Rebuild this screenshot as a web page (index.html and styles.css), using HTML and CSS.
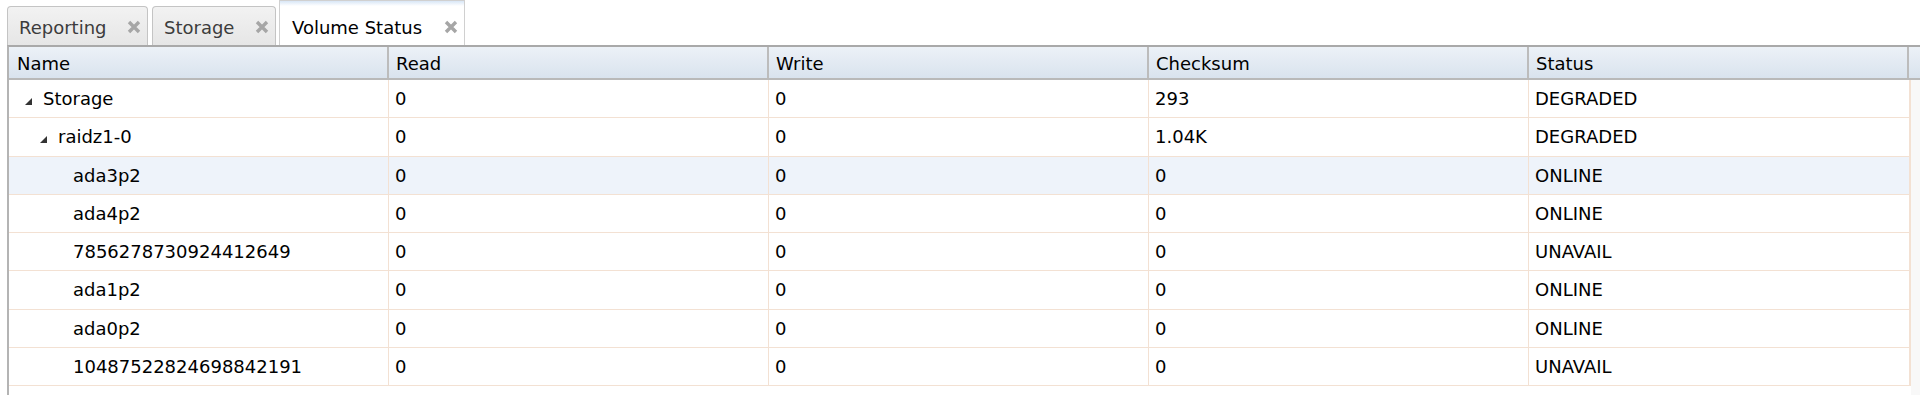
FILE: index.html
```html
<!DOCTYPE html>
<html lang="en">
<head>
    <meta charset="UTF-8">
    <title>Volume Status</title>
    <link rel="stylesheet" href="styles.css">
</head>
<body>

<div class="panel">
    <div class="tabbar">
        <div class="tab tab-reporting">
            <span class="tab-label">Reporting</span>
            <svg class="tab-close" width="14" height="14" viewBox="0 0 14 14"><path d="M2 2 L12 12 M12 2 L2 12"/></svg>
        </div>
        <div class="tab tab-storage">
            <span class="tab-label">Storage</span>
            <svg class="tab-close" width="14" height="14" viewBox="0 0 14 14"><path d="M2 2 L12 12 M12 2 L2 12"/></svg>
        </div>
        <div class="tab tab-volume active">
            <span class="tab-label">Volume Status</span>
            <svg class="tab-close" width="14" height="14" viewBox="0 0 14 14"><path d="M2 2 L12 12 M12 2 L2 12"/></svg>
        </div>
    </div>

    <div class="grid">
        <div class="grid-header">
            <div class="hcell">Name</div>
            <div class="hcell">Read</div>
            <div class="hcell">Write</div>
            <div class="hcell">Checksum</div>
            <div class="hcell">Status</div>
        </div>

        <div class="grid-body">
            <div class="row">
                <div class="cell name level-0"><svg class="expander" width="7" height="7" viewBox="0 0 7 7"><polygon points="7,0 7,7 0,7"/></svg>Storage</div>
                <div class="cell">0</div>
                <div class="cell">0</div>
                <div class="cell">293</div>
                <div class="cell">DEGRADED</div>
            </div>
            <div class="row">
                <div class="cell name level-1"><svg class="expander" width="7" height="7" viewBox="0 0 7 7"><polygon points="7,0 7,7 0,7"/></svg>raidz1-0</div>
                <div class="cell">0</div>
                <div class="cell">0</div>
                <div class="cell">1.04K</div>
                <div class="cell">DEGRADED</div>
            </div>
            <div class="row hover">
                <div class="cell name level-2">ada3p2</div>
                <div class="cell">0</div>
                <div class="cell">0</div>
                <div class="cell">0</div>
                <div class="cell">ONLINE</div>
            </div>
            <div class="row">
                <div class="cell name level-2">ada4p2</div>
                <div class="cell">0</div>
                <div class="cell">0</div>
                <div class="cell">0</div>
                <div class="cell">ONLINE</div>
            </div>
            <div class="row">
                <div class="cell name level-2">7856278730924412649</div>
                <div class="cell">0</div>
                <div class="cell">0</div>
                <div class="cell">0</div>
                <div class="cell">UNAVAIL</div>
            </div>
            <div class="row">
                <div class="cell name level-2">ada1p2</div>
                <div class="cell">0</div>
                <div class="cell">0</div>
                <div class="cell">0</div>
                <div class="cell">ONLINE</div>
            </div>
            <div class="row">
                <div class="cell name level-2">ada0p2</div>
                <div class="cell">0</div>
                <div class="cell">0</div>
                <div class="cell">0</div>
                <div class="cell">ONLINE</div>
            </div>
            <div class="row">
                <div class="cell name level-2">10487522824698842191</div>
                <div class="cell">0</div>
                <div class="cell">0</div>
                <div class="cell">0</div>
                <div class="cell">UNAVAIL</div>
            </div>
        </div>
    </div>
</div>

</body>
</html>
```

FILE: styles.css
```css
html, body {
    height: 100%;
}
body {
    margin: 0;
    font-family: "DejaVu Sans", Verdana, sans-serif;
    font-size: 18px;
    color: #000;
    background: #fff;
}
.panel {
    display: flex;
    flex-direction: column;
    height: 100%;
    padding-left: 7px;
    box-sizing: border-box;
}

/* tabs */
.tabbar {
    display: flex;
    align-items: flex-end;
    height: 45px;
    gap: 4px;
    flex-shrink: 0;
}
.tab {
    display: flex;
    align-items: center;
    justify-content: space-between;
    box-sizing: border-box;
    height: 39px;
    padding: 2px 6px 0 11px;
    border: 1px solid #c4c4c4;
    border-bottom: none;
    border-radius: 4px 4px 0 0;
    background: linear-gradient(#f2f2f2, #e6e6e6);
    color: #3c3c3c;
}
.tab-reporting {
    width: 141px;
}
.tab-storage {
    width: 124px;
}
.tab-volume {
    width: 186px;
    margin-left: -1px;
    padding-left: 12px;
}
.tab.active {
    height: 45px;
    padding-top: 8px;
    border-radius: 0;
    border-color: #d0d0d0;
    background: linear-gradient(#d8e6f6, #ffffff 5px);
    color: #000;
}
.tab-close {
    flex-shrink: 0;
}
.tab-close path {
    stroke: #a6a6a6;
    stroke-width: 3.4;
    fill: none;
}

/* grid */
.grid {
    flex: 1;
    display: flex;
    flex-direction: column;
    border-top: 2px solid #a9a9a9;
    border-left: 2px solid #b4b4b4;
}
.grid-header {
    display: flex;
    height: 33px;
    box-sizing: border-box;
    border-bottom: 2px solid #b9b9b9;
    background: linear-gradient(#ecf1f7, #d9e3ee);
    flex-shrink: 0;
}
.hcell {
    width: 380px;
    box-sizing: border-box;
    padding: 3px 0 0 7px;
    line-height: 28px;
    border-right: 2px solid #bcbcbc;
}
.hcell:first-child {
    padding-left: 8px;
}
.grid-body {
    flex: 1;
    background: linear-gradient(to right, #fff 1902px, #f8f8f8 1902px);
}
.row {
    display: flex;
    width: 1902px;
    height: 38.25px;
    box-sizing: border-box;
    border-bottom: 1px solid #f3e1d3;
    background: #fff;
}
.row.hover {
    background: #eef3fa;
}
.cell {
    width: 380px;
    box-sizing: border-box;
    padding-left: 6px;
    line-height: 37px;
    border-right: 1px solid #f3e1d3;
    white-space: nowrap;
}
.cell:last-child {
    width: 382px;
    border-right: 2px solid #f3e1d3;
}
.name {
    display: flex;
    align-items: center;
}
.expander {
    margin-right: 11px;
    fill: #333;
    position: relative;
    top: 3px;
}
.level-0 {
    padding-left: 16px;
}
.level-1 {
    padding-left: 31px;
}
.level-2 {
    padding-left: 64px;
}
```
